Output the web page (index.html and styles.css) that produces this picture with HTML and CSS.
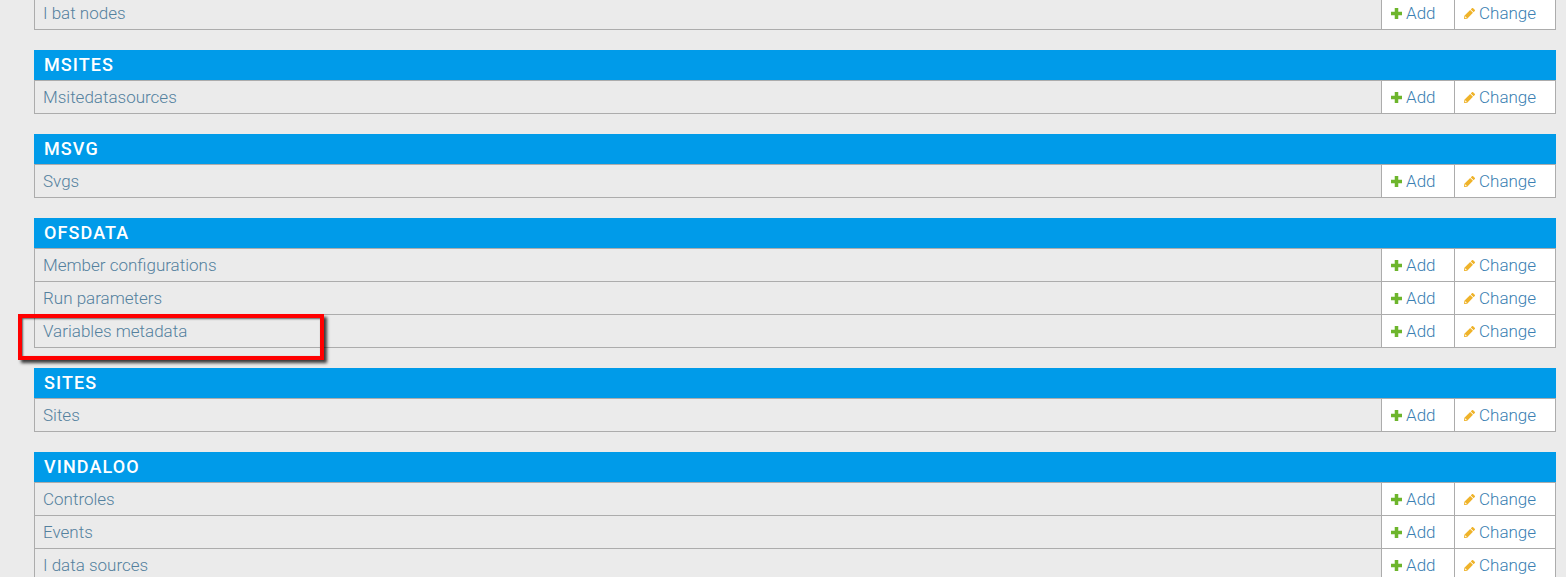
FILE: index.html
```html
<!DOCTYPE html>
<html lang="en">
<head>
<meta charset="utf-8">
<title>Site administration</title>
<link rel="stylesheet" href="styles.css">
</head>
<body>
<svg class="defs" width="0" height="0" aria-hidden="true">
  <symbol id="plus" viewBox="1 1 10 10"><path d="M4.400 1h3.200v3.400H11v3.200H7.600V11H4.400V7.600H1V4.400h3.400z"/></symbol>
  <symbol id="pencil" viewBox="0 0 12 12"><path d="M8.600.3a1 1 0 0 1 1.400 0l1.700 1.700a1 1 0 0 1 0 1.400l-1.200 1.200L7.400 1.500zM6.700 2.200l3.100 3.100-6.300 6.300L0 12l.4-3.500zM1.500 8.900l-.4 2 2-.4z"/></symbol>
</svg>
<main class="page">
  <section class="group group-first">
    <div class="row"><a class="name">I bat nodes</a><a class="act add"><svg class="ico"><use href="#plus"/></svg>Add</a><a class="act chg"><svg class="ico"><use href="#pencil"/></svg>Change</a></div>
  </section>
  <section class="group">
    <h2 class="head">MSITES</h2>
    <div class="row"><a class="name">Msitedatasources</a><a class="act add"><svg class="ico"><use href="#plus"/></svg>Add</a><a class="act chg"><svg class="ico"><use href="#pencil"/></svg>Change</a></div>
  </section>
  <section class="group">
    <h2 class="head">MSVG</h2>
    <div class="row"><a class="name">Svgs</a><a class="act add"><svg class="ico"><use href="#plus"/></svg>Add</a><a class="act chg"><svg class="ico"><use href="#pencil"/></svg>Change</a></div>
  </section>
  <section class="group">
    <h2 class="head">OFSDATA</h2>
    <div class="row"><a class="name">Member configurations</a><a class="act add"><svg class="ico"><use href="#plus"/></svg>Add</a><a class="act chg"><svg class="ico"><use href="#pencil"/></svg>Change</a></div>
    <div class="row"><a class="name">Run parameters</a><a class="act add"><svg class="ico"><use href="#plus"/></svg>Add</a><a class="act chg"><svg class="ico"><use href="#pencil"/></svg>Change</a></div>
    <div class="row"><a class="name">Variables metadata</a><a class="act add"><svg class="ico"><use href="#plus"/></svg>Add</a><a class="act chg"><svg class="ico"><use href="#pencil"/></svg>Change</a></div>
  </section>
  <section class="group">
    <h2 class="head">SITES</h2>
    <div class="row"><a class="name">Sites</a><a class="act add"><svg class="ico"><use href="#plus"/></svg>Add</a><a class="act chg"><svg class="ico"><use href="#pencil"/></svg>Change</a></div>
  </section>
  <section class="group">
    <h2 class="head">VINDALOO</h2>
    <div class="row"><a class="name">Controles</a><a class="act add"><svg class="ico"><use href="#plus"/></svg>Add</a><a class="act chg"><svg class="ico"><use href="#pencil"/></svg>Change</a></div>
    <div class="row"><a class="name">Events</a><a class="act add"><svg class="ico"><use href="#plus"/></svg>Add</a><a class="act chg"><svg class="ico"><use href="#pencil"/></svg>Change</a></div>
    <div class="row"><a class="name">I data sources</a><a class="act add"><svg class="ico"><use href="#plus"/></svg>Add</a><a class="act chg"><svg class="ico"><use href="#pencil"/></svg>Change</a></div>
  </section>
</main>
<div class="callout"></div>
</body>
</html>
```
FILE: styles.css
```css
html, body {
  margin: 0;
  height: 577px;
  overflow: hidden;
  background: #ebebeb;
}
body {
  position: relative;
  font-family: Roboto, "Liberation Sans", sans-serif;
}
.defs { position: absolute; }
.page {
  display: flex;
  flex-direction: column;
  gap: 20px;
  margin-top: -3px;
  padding: 0 10px 0 34px;
}
.head {
  margin: 0;
  height: 30px;
  padding-left: 10px;
  background: #009be9;
  color: #fff;
  font-size: 18px;
  font-weight: 500;
  letter-spacing: 1.1px;
  line-height: 29px;
}
.row {
  display: flex;
  height: 33px;
  box-sizing: border-box;
  border: 1px solid #acacac;
  border-top: 0;
  font-size: 17px;
  font-weight: 300;
  line-height: 32px;
}
.head + .row { height: 34px; border-top: 1px solid #acacac; }
.name {
  flex: 1;
  padding-left: 8px;
  color: #54819e;
}
.act {
  display: flex;
  align-items: center;
  box-sizing: border-box;
  background: #fff;
  border-left: 1px solid #acacac;
  padding-left: 9px;
  color: #3a80b2;
}
.add { width: 73px; gap: 4px; }
.chg { width: 101px; gap: 4px; }
.ico { width: 11px; height: 11px; }
.add .ico { fill: #6db52c; }
.chg .ico { fill: #efb32a; }
.callout {
  position: absolute;
  left: 18px;
  top: 314px;
  width: 306px;
  height: 46px;
  box-sizing: border-box;
  border: 4px solid #ff0000;
  box-shadow: 3px 3px 3px rgba(0,0,0,.75), inset 1px 1px 2px rgba(0,0,0,.6);
}
```
